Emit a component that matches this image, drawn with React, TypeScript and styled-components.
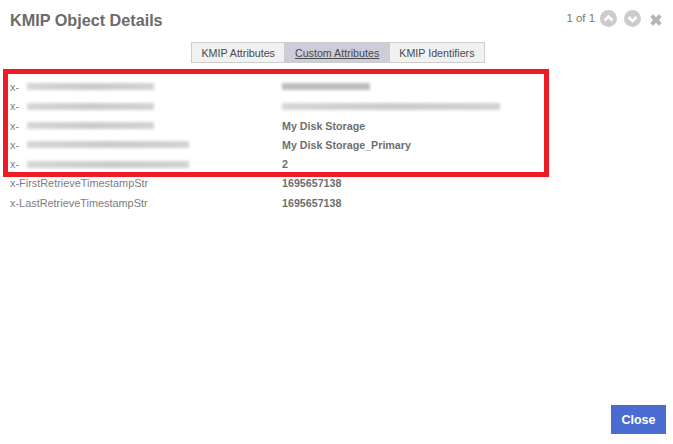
import React from 'react'
import styled, { createGlobalStyle } from 'styled-components'

const GlobalStyle = createGlobalStyle`
  html, body {
    margin: 0;
    padding: 0;
    background: #fff;
    font-family: "Liberation Sans", Arial, sans-serif;
    color: #666;
  }
`

const Dialog = styled.div`
  width: 673px;
  height: 444px;
  display: flex;
  flex-direction: column;
  overflow: hidden;
`

const Header = styled.div`
  display: flex;
  justify-content: space-between;
  align-items: flex-start;
  height: 42px;
  padding: 9px 11px 0 10px;
  box-sizing: border-box;
`

const Title = styled.h1`
  margin: 2px 0 0;
  font-size: 16.2px;
  line-height: 19px;
  font-weight: bold;
  color: #6b6b6b;
`

const Pager = styled.div`
  display: flex;
  align-items: center;
  gap: 7px;
  height: 18px;
  font-size: 11.4px;
  color: #777;
`

const PageCount = styled.span`
  margin-right: -2px;
`

const IconButton = styled.span`
  display: flex;
  width: 17px;
  height: 17px;
`

const CloseIconBox = styled.span`
  display: flex;
  width: 12px;
  height: 12px;
  margin-left: 2px;
  margin-top: 4px;
`

const Tabs = styled.div`
  display: flex;
  justify-content: center;
  height: 21px;
  padding-left: 4px;
`

const Tab = styled.div<{ $active?: boolean }>`
  display: flex;
  align-items: center;
  padding: 0 9.5px;
  border: 1px solid #ccc;
  margin-left: -1px;
  font-size: 10.7px;
  color: #4a4a4a;
  background: ${p => (p.$active ? '#cdcdd9' : '#f1f1f1')};
  text-decoration: ${p => (p.$active ? 'underline' : 'none')};
`

const Content = styled.div`
  position: relative;
  margin-top: 14.3px;
  padding-left: 10px;
`

// the red annotation drawn over the first rows
const Highlight = styled.div`
  position: absolute;
  top: -8.3px;
  left: 3px;
  width: 546px;
  height: 108px;
  box-sizing: border-box;
  border: 5px solid #ee1c25;
`

const Row = styled.div`
  display: grid;
  grid-template-columns: 272px 1fr;
  height: 19.3px;
  align-items: center;
`

const Key = styled.div`
  display: flex;
  align-items: center;
  font-size: 10.9px;
  color: #7d7d7d;
`

const Value = styled.div`
  font-size: 10.7px;
  font-weight: bold;
  color: #6e6e6e;
`

const Blur = styled.span<{ $width: number; $left?: number; $dark?: boolean }>`
  display: block;
  width: ${p => p.$width}px;
  height: 7px;
  margin-left: ${p => p.$left ?? 0}px;
  background: ${p => (p.$dark ? '#bdbdbd' : 'linear-gradient(90deg, #d6d6d6, #cacaca 50%, #d2d2d2)')};
  filter: blur(1.8px);
`

const Footer = styled.div`
  margin-top: auto;
  display: flex;
  justify-content: flex-end;
  padding: 0 7px 10px 0;
`

const CloseButton = styled.button`
  width: 55px;
  height: 29px;
  padding: 0;
  border: 0;
  background: #4a6cd0;
  color: #fff;
  font-family: inherit;
  font-size: 12.5px;
  font-weight: bold;
`

const Chevron = ({ up }: { up?: boolean }) => (
  <IconButton>
    <svg width="17" height="17" viewBox="0 0 17 17">
      <circle cx="8.5" cy="8.5" r="8.5" fill="#ccc" />
      <path d={up ? 'M4.5 10.5 L8.5 6.5 L12.5 10.5' : 'M4.5 7 L8.5 11 L12.5 7'} fill="none" stroke="#fff" strokeWidth="2.6" />
    </svg>
  </IconButton>
)

const CloseIcon = () => (
  <CloseIconBox>
    <svg width="12" height="12" viewBox="0 0 12 12">
      <path d="M1.6 1.6 L10.4 10.4 M10.4 1.6 L1.6 10.4" fill="none" stroke="#b5b5b5" strokeWidth="4" />
    </svg>
  </CloseIconBox>
)

const blurredRows = [
  { key: 127, value: <Blur $width={88} $dark /> },
  { key: 127, value: <Blur $width={218} /> },
  { key: 127, value: 'My Disk Storage' },
  { key: 162, value: 'My Disk Storage_Primary' },
  { key: 162, value: '2' },
]

const plainRows = [
  { key: 'x-FirstRetrieveTimestampStr', value: '1695657138' },
  { key: 'x-LastRetrieveTimestampStr', value: '1695657138' },
]

export default function App() {
  return (
    <Dialog>
      <GlobalStyle />
      <Header>
        <Title>KMIP Object Details</Title>
        <Pager>
          <PageCount>1 of 1</PageCount>
          <Chevron up />
          <Chevron />
          <CloseIcon />
        </Pager>
      </Header>
      <Tabs>
        <Tab>KMIP Attributes</Tab>
        <Tab $active>Custom Attributes</Tab>
        <Tab>KMIP Identifiers</Tab>
      </Tabs>
      <Content>
        {blurredRows.map((row, i) => (
          <Row key={i}>
            <Key>
              x-
              <Blur $width={row.key} $left={8} />
            </Key>
            <Value>{row.value}</Value>
          </Row>
        ))}
        {plainRows.map(row => (
          <Row key={row.key}>
            <Key>{row.key}</Key>
            <Value>{row.value}</Value>
          </Row>
        ))}
        <Highlight />
      </Content>
      <Footer>
        <CloseButton>Close</CloseButton>
      </Footer>
    </Dialog>
  )
}
